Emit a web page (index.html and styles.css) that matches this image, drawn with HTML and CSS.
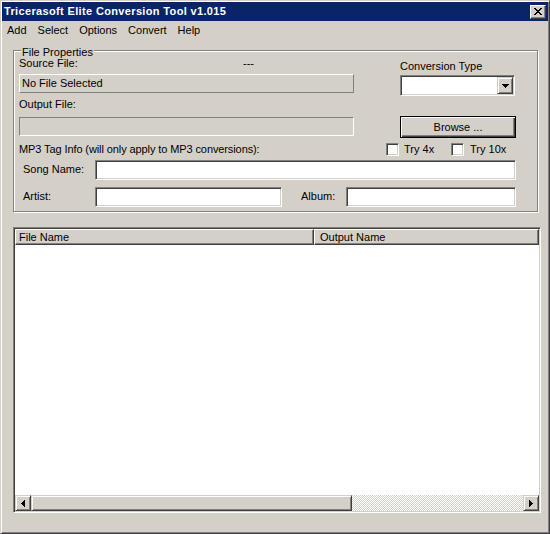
FILE: index.html
```html
<!DOCTYPE html>
<html>
<head>
<meta charset="utf-8">
<title>Tricerasoft Elite Conversion Tool v1.015</title>
<link rel="stylesheet" href="styles.css">
</head>
<body>
<div class="window">
  <div class="titlebar">
    <span class="title">Tricerasoft Elite Conversion Tool v1.015</span>
    <span class="close">
      <svg width="8" height="7" viewBox="0 0 8 7"><path d="M0 0h2v1h-2z M6 0h2v1h-2z M1 1h2v1h-2z M5 1h2v1h-2z M2 2h4v1h-4z M3 3h2v1h-2z M2 4h4v1h-4z M1 5h2v1h-2z M5 5h2v1h-2z M0 6h2v1h-2z M6 6h2v1h-2z" fill="#000"/></svg>
    </span>
  </div>
  <div class="menubar">
    <span class="menu">Add</span>
    <span class="menu">Select</span>
    <span class="menu">Options</span>
    <span class="menu">Convert</span>
    <span class="menu">Help</span>
  </div>
  <div class="content">
    <div class="group">
      <div class="legend">File Properties</div>
      <div class="row-a">
        <div class="col-left">
          <div class="line src-line"><span class="src-label">Source File:</span><span>---</span></div>
          <div class="static-raised">No File Selected</div>
          <div class="line out-label">Output File:</div>
          <div class="static-sunken"></div>
        </div>
        <div class="col-right">
          <div class="line conv-label">Conversion Type</div>
          <div class="combo">
            <span class="combo-btn">
              <svg width="7" height="4" viewBox="0 0 7 4"><path d="M0 0h7v1h-7z M1 1h5v1h-5z M2 2h3v1h-3z M3 3h1v1h-1z" fill="#000"/></svg>
            </span>
          </div>
          <div class="browse">Browse ...</div>
        </div>
      </div>
      <div class="row-b">
        <span class="mp3">MP3 Tag Info (will only apply to MP3 conversions):</span>
        <span class="check check1"><span class="box"></span>Try 4x</span>
        <span class="check check2"><span class="box"></span>Try 10x</span>
      </div>
      <div class="row-c">
        <span class="field-label">Song Name:</span>
        <span class="edit song"></span>
      </div>
      <div class="row-d">
        <span class="field-label">Artist:</span>
        <span class="edit artist"></span>
        <span class="album-label">Album:</span>
        <span class="edit album"></span>
      </div>
    </div>
    <div class="listview">
      <div class="lv-header">
        <div class="hcell c1">File Name</div>
        <div class="hcell c2">Output Name</div>
      </div>
      <div class="lv-body"></div>
      <div class="hscroll">
        <span class="sbtn">
          <svg width="4" height="7" viewBox="0 0 4 7"><path d="M3 0h1v7h-1z M2 1h1v5h-1z M1 2h1v3h-1z M0 3h1v1h-1z" fill="#000"/></svg>
        </span>
        <span class="thumb"></span>
        <span class="track"></span>
        <span class="sbtn">
          <svg width="4" height="7" viewBox="0 0 4 7"><path d="M0 0h1v7h-1z M1 1h1v5h-1z M2 2h1v3h-1z M3 3h1v1h-1z" fill="#000"/></svg>
        </span>
      </div>
    </div>
  </div>
</div>
</body>
</html>
```

FILE: styles.css
```css
* { box-sizing: border-box; }
html, body { margin: 0; padding: 0; background: #d4d0c8; }

.window {
  width: 550px;
  height: 534px;
  padding: 1px;
  border: 1px solid;
  border-color: #d4d0c8 #404040 #404040 #d4d0c8;
  box-shadow: inset 1px 1px #fff, inset -1px -1px #808080;
  background: #d4d0c8;
  font-family: "Liberation Sans", Arial, sans-serif;
  font-size: 11px;
  color: #000;
  display: flex;
  flex-direction: column;
}

.titlebar {
  height: 19px;
  background: #0a246a;
  display: flex;
  align-items: center;
  justify-content: space-between;
  padding: 0 2px 0 2px;
}
.title {
  color: #fff;
  font-weight: bold;
  line-height: 13px;
  letter-spacing: 0.35px;
}
.close {
  width: 16px;
  height: 14px;
  background: #d4d0c8;
  border: 1px solid;
  border-color: #fff #404040 #404040 #fff;
  box-shadow: inset -1px -1px #808080;
  display: flex;
  align-items: center;
  justify-content: center;
}
.close svg { display: block; }

.menubar {
  height: 19px;
  display: flex;
  gap: 11px;
  padding-left: 5px;
  line-height: 19px;
}

.content { padding: 10px 0 0 11px; }

.group {
  width: 525px;
  border: 1px solid #808080;
  box-shadow: inset 1px 1px #fff, 1px 1px #fff;
  padding: 0 0 4px 5px;
}
.legend {
  width: fit-content;
  margin: -5px 0 -2px 2px;
  padding: 0 1px;
  background: #d4d0c8;
  line-height: 13px;
}

.line { height: 13px; line-height: 13px; }

.row-a { display: flex; }
.col-left { width: 335px; display: flex; flex-direction: column; }
.src-line { display: flex; }
.src-label { width: 224px; }
.static-raised {
  margin-top: 4px;
  height: 19px;
  border: 1px solid;
  border-color: #fff #808080 #808080 #fff;
  line-height: 17px;
  padding-left: 2px;
}
.out-label { margin-top: 5px; }
.static-sunken {
  margin-top: 6px;
  height: 19px;
  border: 1px solid;
  border-color: #808080 #fff #fff #808080;
}

.col-right { width: 116px; margin-left: 46px; display: flex; flex-direction: column; }
.conv-label { margin-top: 3px; }
.combo {
  margin-top: 2px;
  width: 115px;
  height: 21px;
  padding: 1px;
  background: #fff;
  border: 1px solid;
  border-color: #808080 #fff #fff #808080;
  box-shadow: inset 1px 1px #404040, inset -1px -1px #d4d0c8;
  display: flex;
  justify-content: flex-end;
}
.combo-btn {
  width: 16px;
  height: 17px;
  background: #d4d0c8;
  border: 1px solid;
  border-color: #d4d0c8 #404040 #404040 #d4d0c8;
  box-shadow: inset 1px 1px #fff, inset -1px -1px #808080;
  display: flex;
  align-items: center;
  justify-content: center;
}
.combo-btn svg, .sbtn svg { display: block; }
.browse {
  margin-top: 20px;
  width: 116px;
  height: 22px;
  border: 1px solid #000;
  box-shadow: inset 1px 1px #fff, inset -1px -1px #404040, inset -2px -2px #808080;
  text-align: center;
  line-height: 20px;
}

.row-b { margin-top: 5px; height: 13px; display: flex; align-items: center; }
.mp3 { width: 367px; line-height: 13px; letter-spacing: -0.1px; }
.check { display: flex; align-items: center; gap: 5px; line-height: 13px; }
.check1 { width: 65px; }
.check2 { gap: 6px; }
.box {
  width: 13px;
  height: 13px;
  background: #fff;
  border: 1px solid;
  border-color: #808080 #fff #fff #808080;
  box-shadow: inset 1px 1px #404040, inset -1px -1px #d4d0c8;
}

.row-c { margin-top: 4px; display: flex; align-items: center; }
.row-d { margin-top: 7px; display: flex; align-items: center; }
.field-label { width: 76px; padding-left: 4px; line-height: 13px; margin-top: -1px; }
.album-label { width: 64px; padding-left: 19px; line-height: 13px; margin-top: -1px; }
.edit {
  height: 20px;
  background: #fff;
  border: 1px solid;
  border-color: #808080 #fff #fff #808080;
  box-shadow: inset 1px 1px #404040, inset -1px -1px #d4d0c8;
}
.song { width: 421px; }
.artist { width: 187px; }
.album { width: 170px; }

.listview {
  margin-top: 15px;
  width: 528px;
  height: 286px;
  padding: 1px;
  background: #fff;
  border: 1px solid;
  border-color: #808080 #fff #fff #808080;
  box-shadow: inset 1px 1px #404040, inset -1px -1px #d4d0c8;
  display: flex;
  flex-direction: column;
}
.lv-header { display: flex; height: 16px; }
.hcell {
  background: #d4d0c8;
  border: 1px solid;
  border-color: #fff #404040 #404040 #fff;
  box-shadow: inset -1px -1px #808080;
  line-height: 14px;
  white-space: nowrap;
}
.c1 { width: 299px; padding-left: 3px; }
.c2 { flex: 1; padding-left: 5px; }
.lv-body { flex: 1; background: #fff; }
.hscroll { height: 16px; display: flex; }
.sbtn, .thumb {
  height: 16px;
  background: #d4d0c8;
  border: 1px solid;
  border-color: #d4d0c8 #404040 #404040 #d4d0c8;
  box-shadow: inset 1px 1px #fff, inset -1px -1px #808080;
}
.sbtn { width: 16px; display: flex; align-items: center; justify-content: center; }
.thumb { width: 321px; }
.track {
  flex: 1;
  background: repeating-conic-gradient(#fff 0 25%, #d4d0c8 0 50%) 0 0 / 2px 2px;
}
```
